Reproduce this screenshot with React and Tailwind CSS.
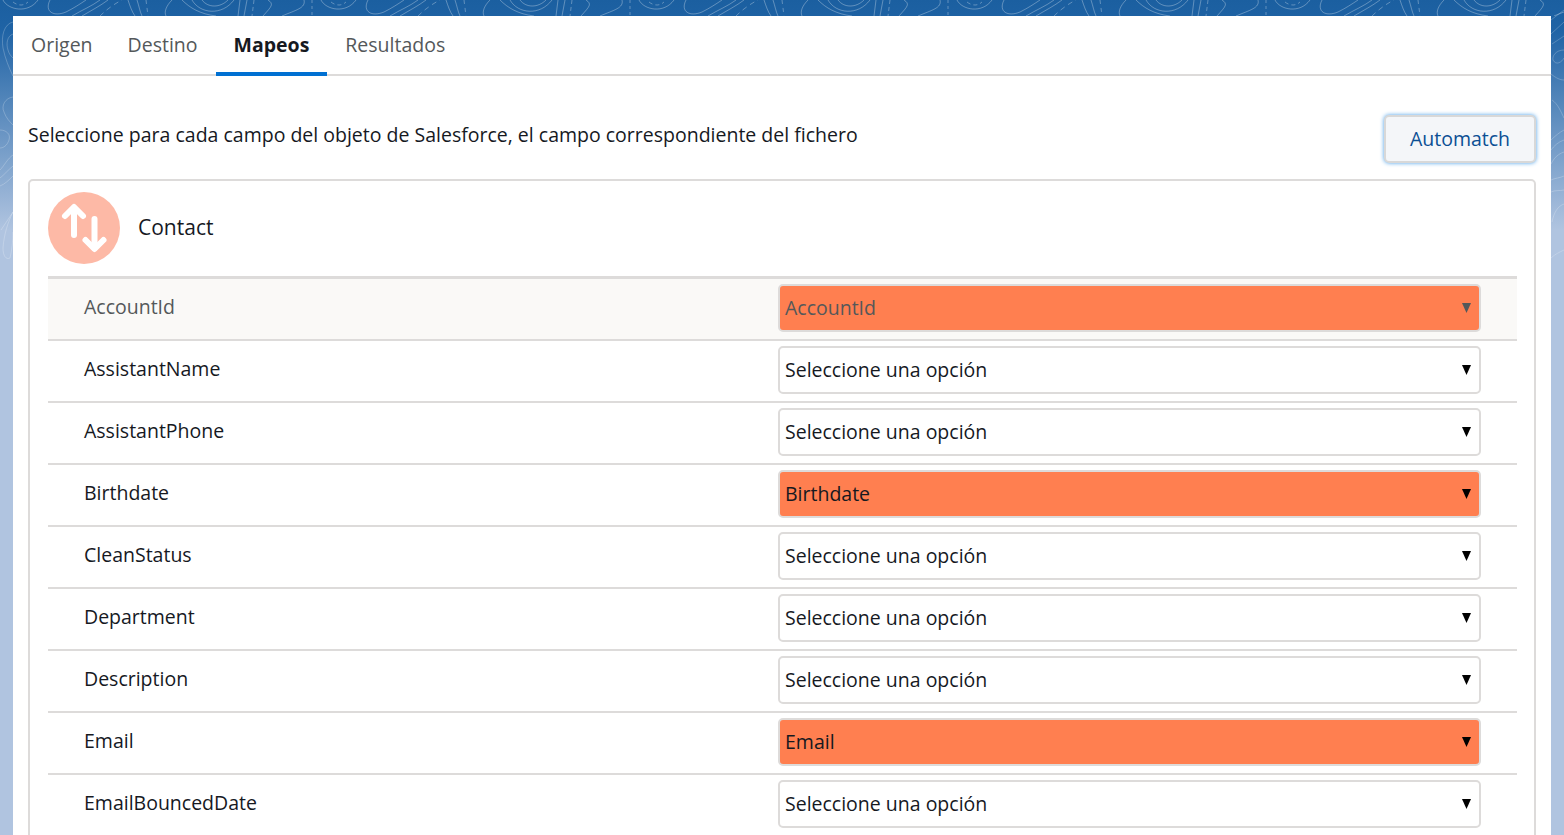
const rows = [
  { name: "AccountId", value: "AccountId", hit: true, muted: true },
  { name: "AssistantName" },
  { name: "AssistantPhone" },
  { name: "Birthdate", value: "Birthdate", hit: true },
  { name: "CleanStatus" },
  { name: "Department" },
  { name: "Description" },
  { name: "Email", value: "Email", hit: true },
  { name: "EmailBouncedDate" },
];

function Topo() {
  return (
    <svg className="absolute inset-0" width="1564" height="835" aria-hidden="true">
      <defs>
        <pattern id="topo" x="0" y="0" width="318" height="16" patternUnits="userSpaceOnUse">
          <g fill="none" stroke="#fff" strokeOpacity="0.3" strokeWidth="1">
            <path d="M3 0 C8 10 28 14 38 0" />
            <path d="M13 2 C18 6 24 6 28 2" strokeDasharray="4 3" />
            <path d="M50 0 C44 12 54 17 66 12 C74 8 80 4 86 0" />
            <path d="M72 16 C82 10 92 6 100 0" />
            <path d="M82 16 C92 10 100 6 108 0" />
            <path d="M100 16 C106 10 114 4 122 0" strokeDasharray="5 4" />
            <path d="M128 0 C130 6 132 12 135 16" />
            <path d="M137 0 C139 6 140 12 142 16" />
            <path d="M146 0 L148 16" strokeDasharray="4 4" />
            <path d="M172 0 C166 6 164 12 166 16" />
            <path d="M182 0 C190 8 200 14 216 16" />
            <path d="M192 0 C200 14 222 16 234 0" />
            <path d="M202 0 C208 8 220 8 228 0" />
            <path d="M240 0 L238 16" />
            <path d="M247 0 L244 16" />
            <path d="M254 0 L252 16" strokeDasharray="4 3" />
            <path d="M263 16 C272 6 274 4 268 0" />
            <path d="M282 16 C296 10 306 8 304 0" />
            <path d="M312 0 V16" strokeDasharray="3 3" />
          </g>
        </pattern>
      </defs>
      <rect x="0" y="0" width="1564" height="16" fill="url(#topo)" />
      <g fill="none" stroke="#fff" strokeOpacity="0.22" strokeWidth="1">
        <path d="M13 22 C4 24 1 36 3 48 C5 58 9 68 13 76" />
        <path d="M13 34 C7 36 6 44 8 50 C9 54 11 56 13 58" />
        <path d="M13 97 C5 98 1 106 4 112 C6 118 10 122 13 125" />
        <path d="M0 130 C6 130 11 134 9 140 C7 146 3 148 0 148" />
        <path d="M13 155 C8 158 4 166 0 170" />
        <path d="M13 166 C8 170 4 175 0 178" />
        <path d="M13 176 C9 180 5 184 0 186" />
        <path d="M13 212 C8 222 4 234 3 248 C3 256 6 260 10 258 C12 250 13 240 13 232" />
        <path d="M13 212 C9 218 5 224 1 230" />
        <path d="M1564 10 L1551 20" />
        <path d="M1564 22 L1551 34" />
        <path d="M1564 36 L1552 44" />
        <path d="M1564 50 C1556 50 1552 56 1553 60 C1556 66 1562 62 1564 58" />
        <path d="M1551 74 C1556 78 1560 80 1564 80" />
        <path d="M1552 100 C1558 104 1561 112 1564 118" />
        <path d="M1564 130 C1560 132 1555 136 1551 140" />
        <path d="M1564 140 C1558 142 1554 146 1551 150" />
        <path d="M1564 152 C1558 154 1554 158 1551 164" />
        <path d="M1564 176 C1560 178 1555 178 1551 180" />
        <path d="M1564 190 C1560 191 1555 190 1551 192" />
        <path d="M1564 204 C1558 206 1554 212 1552 222" />
        <path d="M1564 250 C1560 252 1555 254 1551 258" />
      </g>
    </svg>
  );
}

function Arrows() {
  return (
    <svg width="72" height="72" viewBox="0 0 72 72" aria-hidden="true">
      <circle cx="36" cy="36" r="36" fill="#fdb9a6" />
      <g fill="none" stroke="#fff" strokeWidth="6" strokeLinecap="round" strokeLinejoin="round">
        <path d="M26 43 V16" />
        <path d="M17 24 L26 15 L35 24" />
        <path d="M46.5 27 V56" />
        <path d="M37.5 48 L46.5 57 L55.5 48" />
      </g>
    </svg>
  );
}

function Row({ row, first }) {
  const textColor = row.muted ? "text-[#54585a]" : "text-[#16191f]";
  return (
    <div className={`flex h-[62px] items-start border-b-2 border-[#dddbda] pt-[5px] ${first ? "bg-[#faf9f7]" : "bg-white"}`}>
      <div className={`mt-2 w-[730px] pl-9 text-[19.5px] ${textColor}`}>{row.name}</div>
      <div className={`flex h-12 w-[703px] items-center justify-between rounded-[5px] border-2 border-[#dddbda] pr-2 pl-[5px] text-[19.5px] ${row.hit ? "bg-[#ff7f50]" : "bg-white"} ${textColor}`}>
        <span>{row.value || "Seleccione una opción"}</span>
        <svg width="9" height="10" viewBox="0 0 9 10" aria-hidden="true">
          <path d="M0 0 H9 L4.5 10 Z" fill={row.muted ? "#54585a" : "#000"} />
        </svg>
      </div>
    </div>
  );
}

export default function App() {
  return (
    <div className="relative h-[835px] w-[1564px] overflow-hidden bg-[linear-gradient(180deg,#1b5fa0_0px,#1f63a5_30px,#b0c4e0_230px,#b0c4e0_100%)] pt-4 pl-[13px] font-['Open_Sans',sans-serif]">
      <Topo />
      <div className="relative h-[819px] w-[1538px] overflow-hidden bg-white">
        <div className="flex h-[60px] border-b-2 border-[#dddbda] text-[19.5px] text-[#54585a]">
          <div className="flex items-center pr-[17px] pl-[18px]">Origen</div>
          <div className="flex items-center px-[18px]">Destino</div>
          <div className="-mb-0.5 flex items-center border-b-4 border-[#0070d2] px-[18px] pt-0.5 font-bold text-[#16191f]">Mapeos</div>
          <div className="flex items-center px-[18px]">Resultados</div>
        </div>
        <div className="flex items-start justify-between pt-[39px] pr-[15px] pl-[15px]">
          <p className="pt-[5px] text-[19.5px] text-[#16191f]">Seleccione para cada campo del objeto de Salesforce, el campo correspondiente del fichero</p>
          <button className="h-12 w-[152px] rounded-[5px] border-2 border-[#d8d8d8] bg-[#f4f6f9] text-[19.5px] text-[#0b4f94] shadow-[0_0_4px_#4a9fe8]">Automatch</button>
        </div>
        <div className="mt-4 ml-[15px] w-[1508px] rounded-t-[5px] border-2 border-[#dddbda] pt-[11px] pr-[17px] pl-[18px]">
          <div className="flex h-[84px] items-start">
            <Arrows />
            <span className="mt-[20px] ml-[18px] text-[21px] text-[#16191f]">Contact</span>
          </div>
          <div className="border-t-[3px] border-[#dddbda]">
            {rows.map((row, i) => (
              <Row key={row.name} row={row} first={i === 0} />
            ))}
          </div>
        </div>
      </div>
    </div>
  );
}
